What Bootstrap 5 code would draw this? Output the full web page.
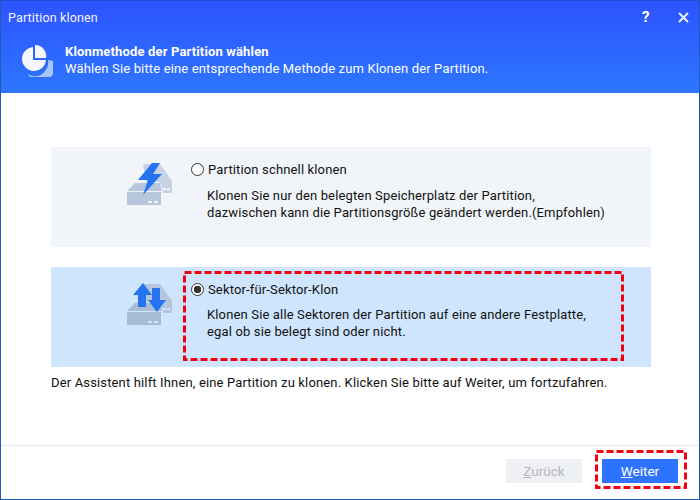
<!DOCTYPE html>
<html lang="de">
<head>
  <meta charset="UTF-8">
  <title>Partition klonen</title>
  <link href="https://cdn.jsdelivr.net/npm/bootstrap@5.3.0/dist/css/bootstrap.min.css" rel="stylesheet">
  <style>
    html, body { width: 700px; height: 500px; overflow: hidden; }
    body { font-family: Roboto, "Liberation Sans", sans-serif; font-size: 13px; line-height: 17px; letter-spacing: .15px; color: #111; background: #fff; }
    .app-window { width: 700px; height: 500px; border: 1px solid #1d5db4; border-top-color: #2050c8; position: relative; }
    .app-head { height: 92px; background: linear-gradient(#2e53ff, #2d76ff); color: #fff; }
    .app-title { height: 43px; padding: 8px 0 0 7px; font-size: 12.5px; color: #f2f2ff; }
    .app-ctrl { width: 47px; height: 33px; margin-right: 10px; font-size: 15px; }
    .app-sub { padding-left: 20px; gap: 12px; }
    .app-sub strong { font-weight: 700; font-size: 13px; line-height: 16px; }
    .app-main { padding: 54px 48px 0 50px; }
    .opt-box { height: 100px; background: #f1f5f9; margin-bottom: 20px; padding: 13px 0 0 75px; }
    .opt-box .opt-icon { margin-top: 1px; }
    .opt-box.opt-on { background: #cfe5fd; margin-bottom: 7px; }
    .opt-icon { width: 64px; height: 54px; flex: none; }
    .opt-label { gap: 4px; height: 18px; margin-left: 1px; }
    .opt-text { margin: 9px 0 0 17px; }
    .opt-on .opt-text { margin-top: 8px; }
    .opt-radio { width: 13px; height: 13px; border-radius: 50%; border: 1px solid #333; background: #fff; flex: none; }
    .opt-on .opt-radio { background: radial-gradient(circle, #333 0 3.5px, #fff 4px); }
    .app-foot { height: 54px; margin-top: 54px; border-top: 1px solid #e6e8f2; padding: 13px 21px 0 0; gap: 20px; }
    .app-btn { width: 76px; height: 24px; padding: 0; border: 0; border-radius: 0; font-size: 13.5px; line-height: 24px; }
    .app-btn:disabled { background: #eff0f5; color: #b5b7c0; opacity: 1; }
    .app-btn.btn-primary { background: #2e73ff; color: #fff; }
    .mark-line { position: absolute; overflow: visible; }
    .mark-line rect { fill: none; stroke: #f00010; stroke-width: 3; stroke-dasharray: 7 3; }
    .mark-a { left: 182px; top: 270px; }
    .mark-b { left: 594px; top: 449px; }
  </style>
</head>
<body>
  <div class="app-window">
    <div class="app-head">
      <div class="d-flex justify-content-between">
        <div class="app-title">Partition klonen</div>
        <div class="app-ctrl d-flex justify-content-between align-items-center">
          <span class="fw-bold">?</span>
          <svg width="11" height="11" viewBox="0 0 11 11"><path d="M1 1l9 9M10 1l-9 9" stroke="#eef1ff" stroke-width="1.8" fill="none"/></svg>
        </div>
      </div>
      <div class="app-sub d-flex align-items-center">
        <svg width="32" height="32" viewBox="0 0 32 32">
          <path d="M32 16a14 14 0 0 1-25 13 12 12 0 0 0 17-3 13 13 0 0 0 3-11z" fill="#a9c4fb"/>
          <path d="M12 2a12 12 0 1 0 13 13H12z" fill="#f4f7ff"/>
          <path d="M14 0a11 11 0 0 1 11 13H14z" fill="#f4f7ff"/>
        </svg>
        <div>
          <strong class="d-block">Klonmethode der Partition wählen</strong>
          <span>Wählen Sie bitte eine entsprechende Methode zum Klonen der Partition.</span>
        </div>
      </div>
    </div>
    <div class="app-main">
      <div class="opt-box d-flex">
        <svg class="opt-icon" viewBox="0 0 64 54">
          <path d="M17 3h17l12 17v12H22z" fill="#c6d3e3"/>
          <path d="M9 21h25l3 8v15H1V29z" fill="#f1f5f9"/>
          <path d="M9 22h25l2 8H1z" fill="#b7c6da"/>
          <rect x="1" y="31" width="34" height="13" fill="#b7c6da"/>
          <rect x="22" y="40" width="4" height="2" fill="#f1f5f9"/><rect x="28" y="40" width="4" height="2" fill="#f1f5f9"/>
          <rect x="37" y="27" width="3" height="2" fill="#f1f5f9"/><rect x="41" y="27" width="3" height="2" fill="#f1f5f9"/>
          <path d="M26 2h8l-7 11h9L17 34l5-15H12z" fill="#2573f0"/>
        </svg>
        <div>
          <div class="opt-label d-flex align-items-center"><span class="opt-radio"></span><span>Partition schnell klonen</span></div>
          <p class="opt-text">Klonen Sie nur den belegten Speicherplatz der Partition,<br>dazwischen kann die Partitionsgröße geändert werden.(Empfohlen)</p>
        </div>
      </div>
      <div class="opt-box opt-on d-flex">
        <svg class="opt-icon" viewBox="0 0 64 54">
          <path d="M17 3h17l12 17v12H22z" fill="#b5c6dc"/>
          <path d="M9 21h25l3 8v15H1V29z" fill="#cfe5fd"/>
          <path d="M9 22h25l2 8H1z" fill="#a9bcd6"/>
          <rect x="1" y="31" width="34" height="13" fill="#a9bcd6"/>
          <rect x="22" y="40" width="4" height="2" fill="#cfe5fd"/><rect x="28" y="40" width="4" height="2" fill="#cfe5fd"/>
          <rect x="37" y="27" width="3" height="2" fill="#cfe5fd"/><rect x="41" y="27" width="3" height="2" fill="#cfe5fd"/>
          <path d="M17 2l9 12h-6v12h-8V14H7z" fill="#2573f0"/>
          <path d="M26 7h8v12h6l-9 12-9-12h4z" fill="#2573f0"/>
        </svg>
        <div>
          <div class="opt-label d-flex align-items-center"><span class="opt-radio"></span><span>Sektor-für-Sektor-Klon</span></div>
          <p class="opt-text">Klonen Sie alle Sektoren der Partition auf eine andere Festplatte,<br>egal ob sie belegt sind oder nicht.</p>
        </div>
      </div>
      <div>Der Assistent hilft Ihnen, eine Partition zu klonen. Klicken Sie bitte auf Weiter, um fortzufahren.</div>
    </div>
    <div class="app-foot d-flex justify-content-end">
      <button class="btn app-btn" disabled><u>Z</u>urück</button>
      <button class="btn btn-primary app-btn"><u>W</u>eiter</button>
    </div>
    <svg class="mark-line mark-a" width="441" height="90"><rect x="1.5" y="1.5" width="438" height="87"/></svg>
    <svg class="mark-line mark-b" width="92" height="39"><rect x="1.5" y="1.5" width="89" height="36"/></svg>
  </div>
  <script src="https://cdn.jsdelivr.net/npm/bootstrap@5.3.0/dist/js/bootstrap.bundle.min.js"></script>
</body>
</html>
